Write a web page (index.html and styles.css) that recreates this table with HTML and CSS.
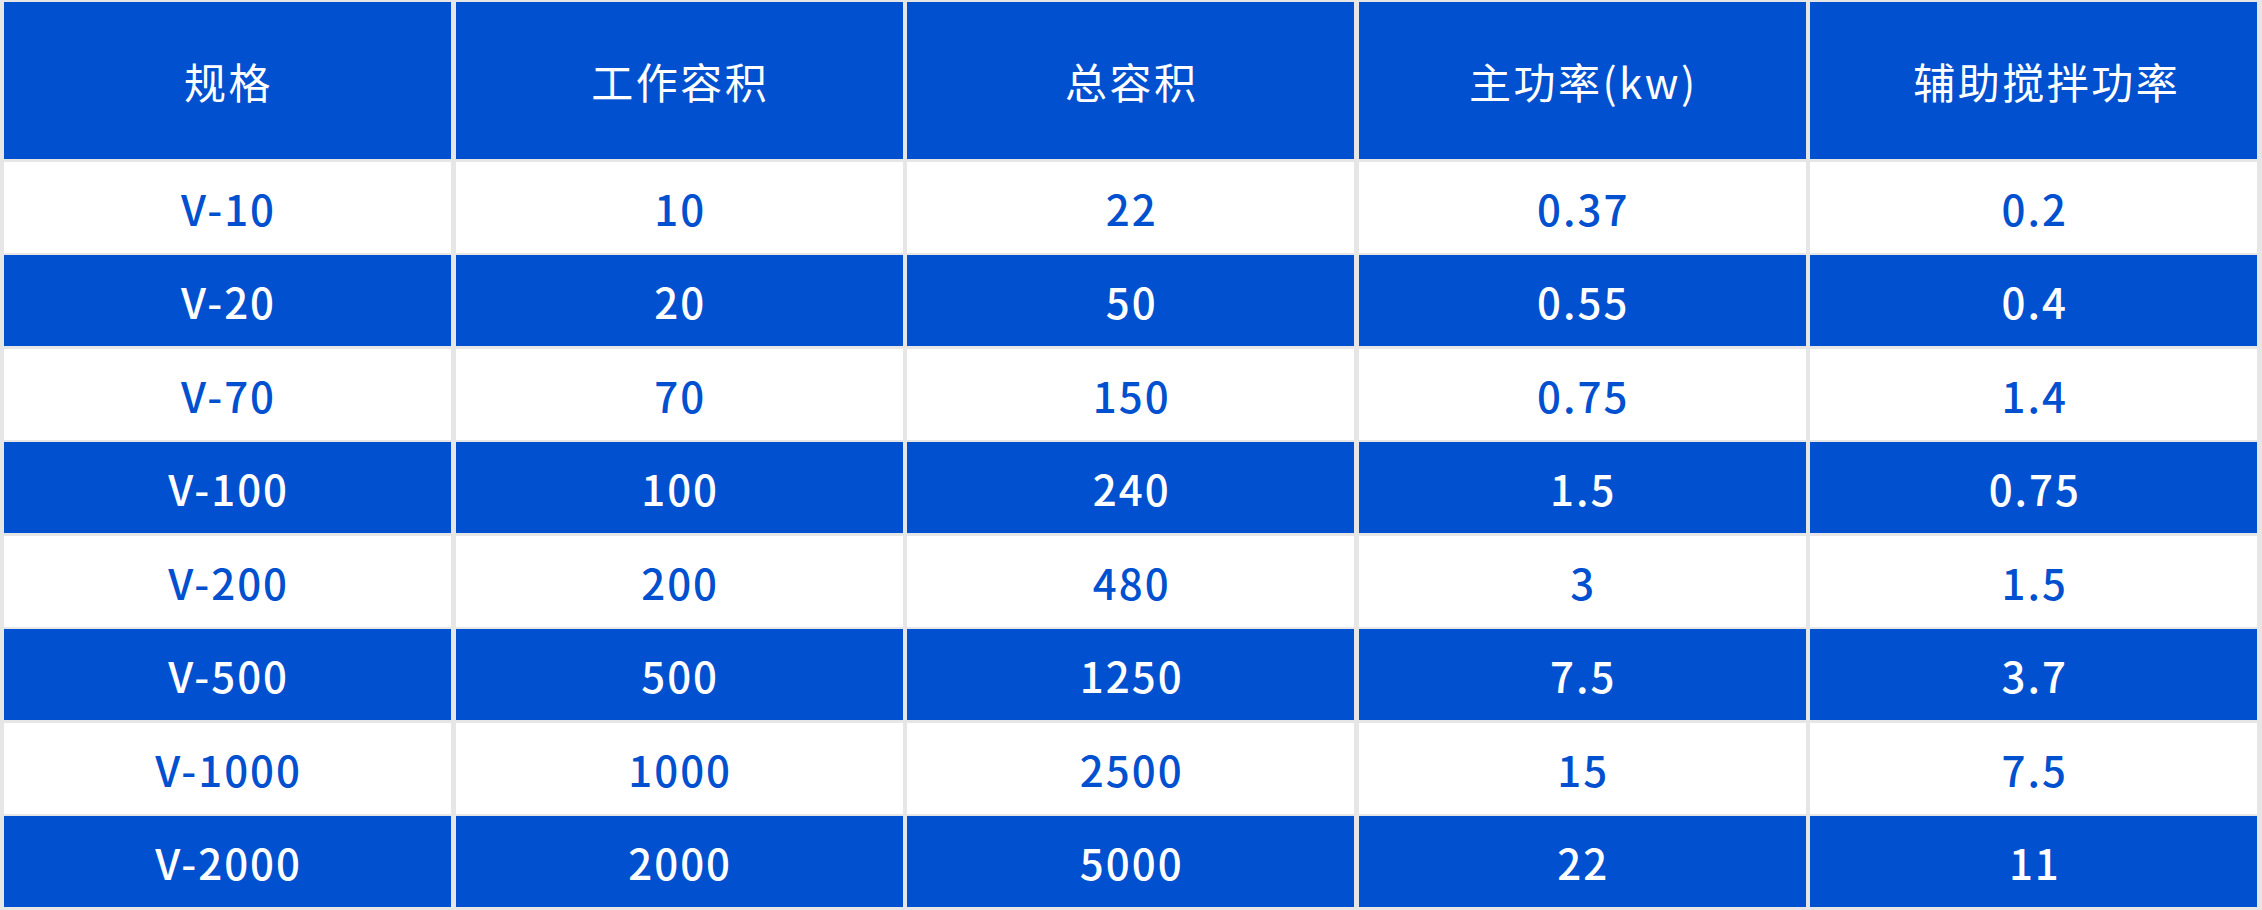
FILE: index.html
```html
<!DOCTYPE html>
<html lang="zh-CN">
<head>
<meta charset="utf-8">
<title>规格参数</title>
<link rel="stylesheet" href="styles.css">
</head>
<body>
<div class="table">
  <div class="row head"><div class="cell">规格</div><div class="cell">工作容积</div><div class="cell">总容积</div><div class="cell">主功率(kw)</div><div class="cell cell-shift">辅助搅拌功率</div></div>
  <div class="row light"><div class="cell">V-10</div><div class="cell">10</div><div class="cell">22</div><div class="cell">0.37</div><div class="cell">0.2</div></div>
  <div class="row dark"><div class="cell">V-20</div><div class="cell">20</div><div class="cell">50</div><div class="cell">0.55</div><div class="cell">0.4</div></div>
  <div class="row light"><div class="cell">V-70</div><div class="cell">70</div><div class="cell">150</div><div class="cell">0.75</div><div class="cell">1.4</div></div>
  <div class="row dark"><div class="cell">V-100</div><div class="cell">100</div><div class="cell">240</div><div class="cell">1.5</div><div class="cell">0.75</div></div>
  <div class="row light"><div class="cell">V-200</div><div class="cell">200</div><div class="cell">480</div><div class="cell">3</div><div class="cell">1.5</div></div>
  <div class="row dark"><div class="cell">V-500</div><div class="cell">500</div><div class="cell">1250</div><div class="cell">7.5</div><div class="cell">3.7</div></div>
  <div class="row light"><div class="cell">V-1000</div><div class="cell">1000</div><div class="cell">2500</div><div class="cell">15</div><div class="cell">7.5</div></div>
  <div class="row dark"><div class="cell">V-2000</div><div class="cell">2000</div><div class="cell">5000</div><div class="cell">22</div><div class="cell">11</div></div>
</div>
</body>
</html>
```
FILE: styles.css
```css
html, body {
  margin: 0;
  padding: 0;
  background: #e6e6e6;
}
.table {
  width: 2262px;
  height: 910px;
  box-sizing: border-box;
  padding: 2px 4.6px 3px 4px;
  display: grid;
  grid-template-rows: 157px repeat(8, 91px);
  row-gap: 2.5px;
  background: #e6e6e6;
  font-family: "Noto Sans CJK SC", "Noto Sans", sans-serif;
  font-size: 42px;
  font-weight: 500;
  letter-spacing: 2px;
}
.row {
  display: grid;
  grid-template-columns: repeat(5, 1fr);
  column-gap: 4.4px;
}
.cell {
  display: flex;
  align-items: center;
  justify-content: center;
  padding-left: 2px;
}
.head .cell {
  font-weight: 400;
  letter-spacing: 2.5px;
}
.head .cell-shift {
  padding-left: 26px;
}
.head .cell,
.dark .cell {
  background: #0050cf;
  color: #ffffff;
}
.light .cell {
  background: #ffffff;
  color: #0050cf;
}
```
